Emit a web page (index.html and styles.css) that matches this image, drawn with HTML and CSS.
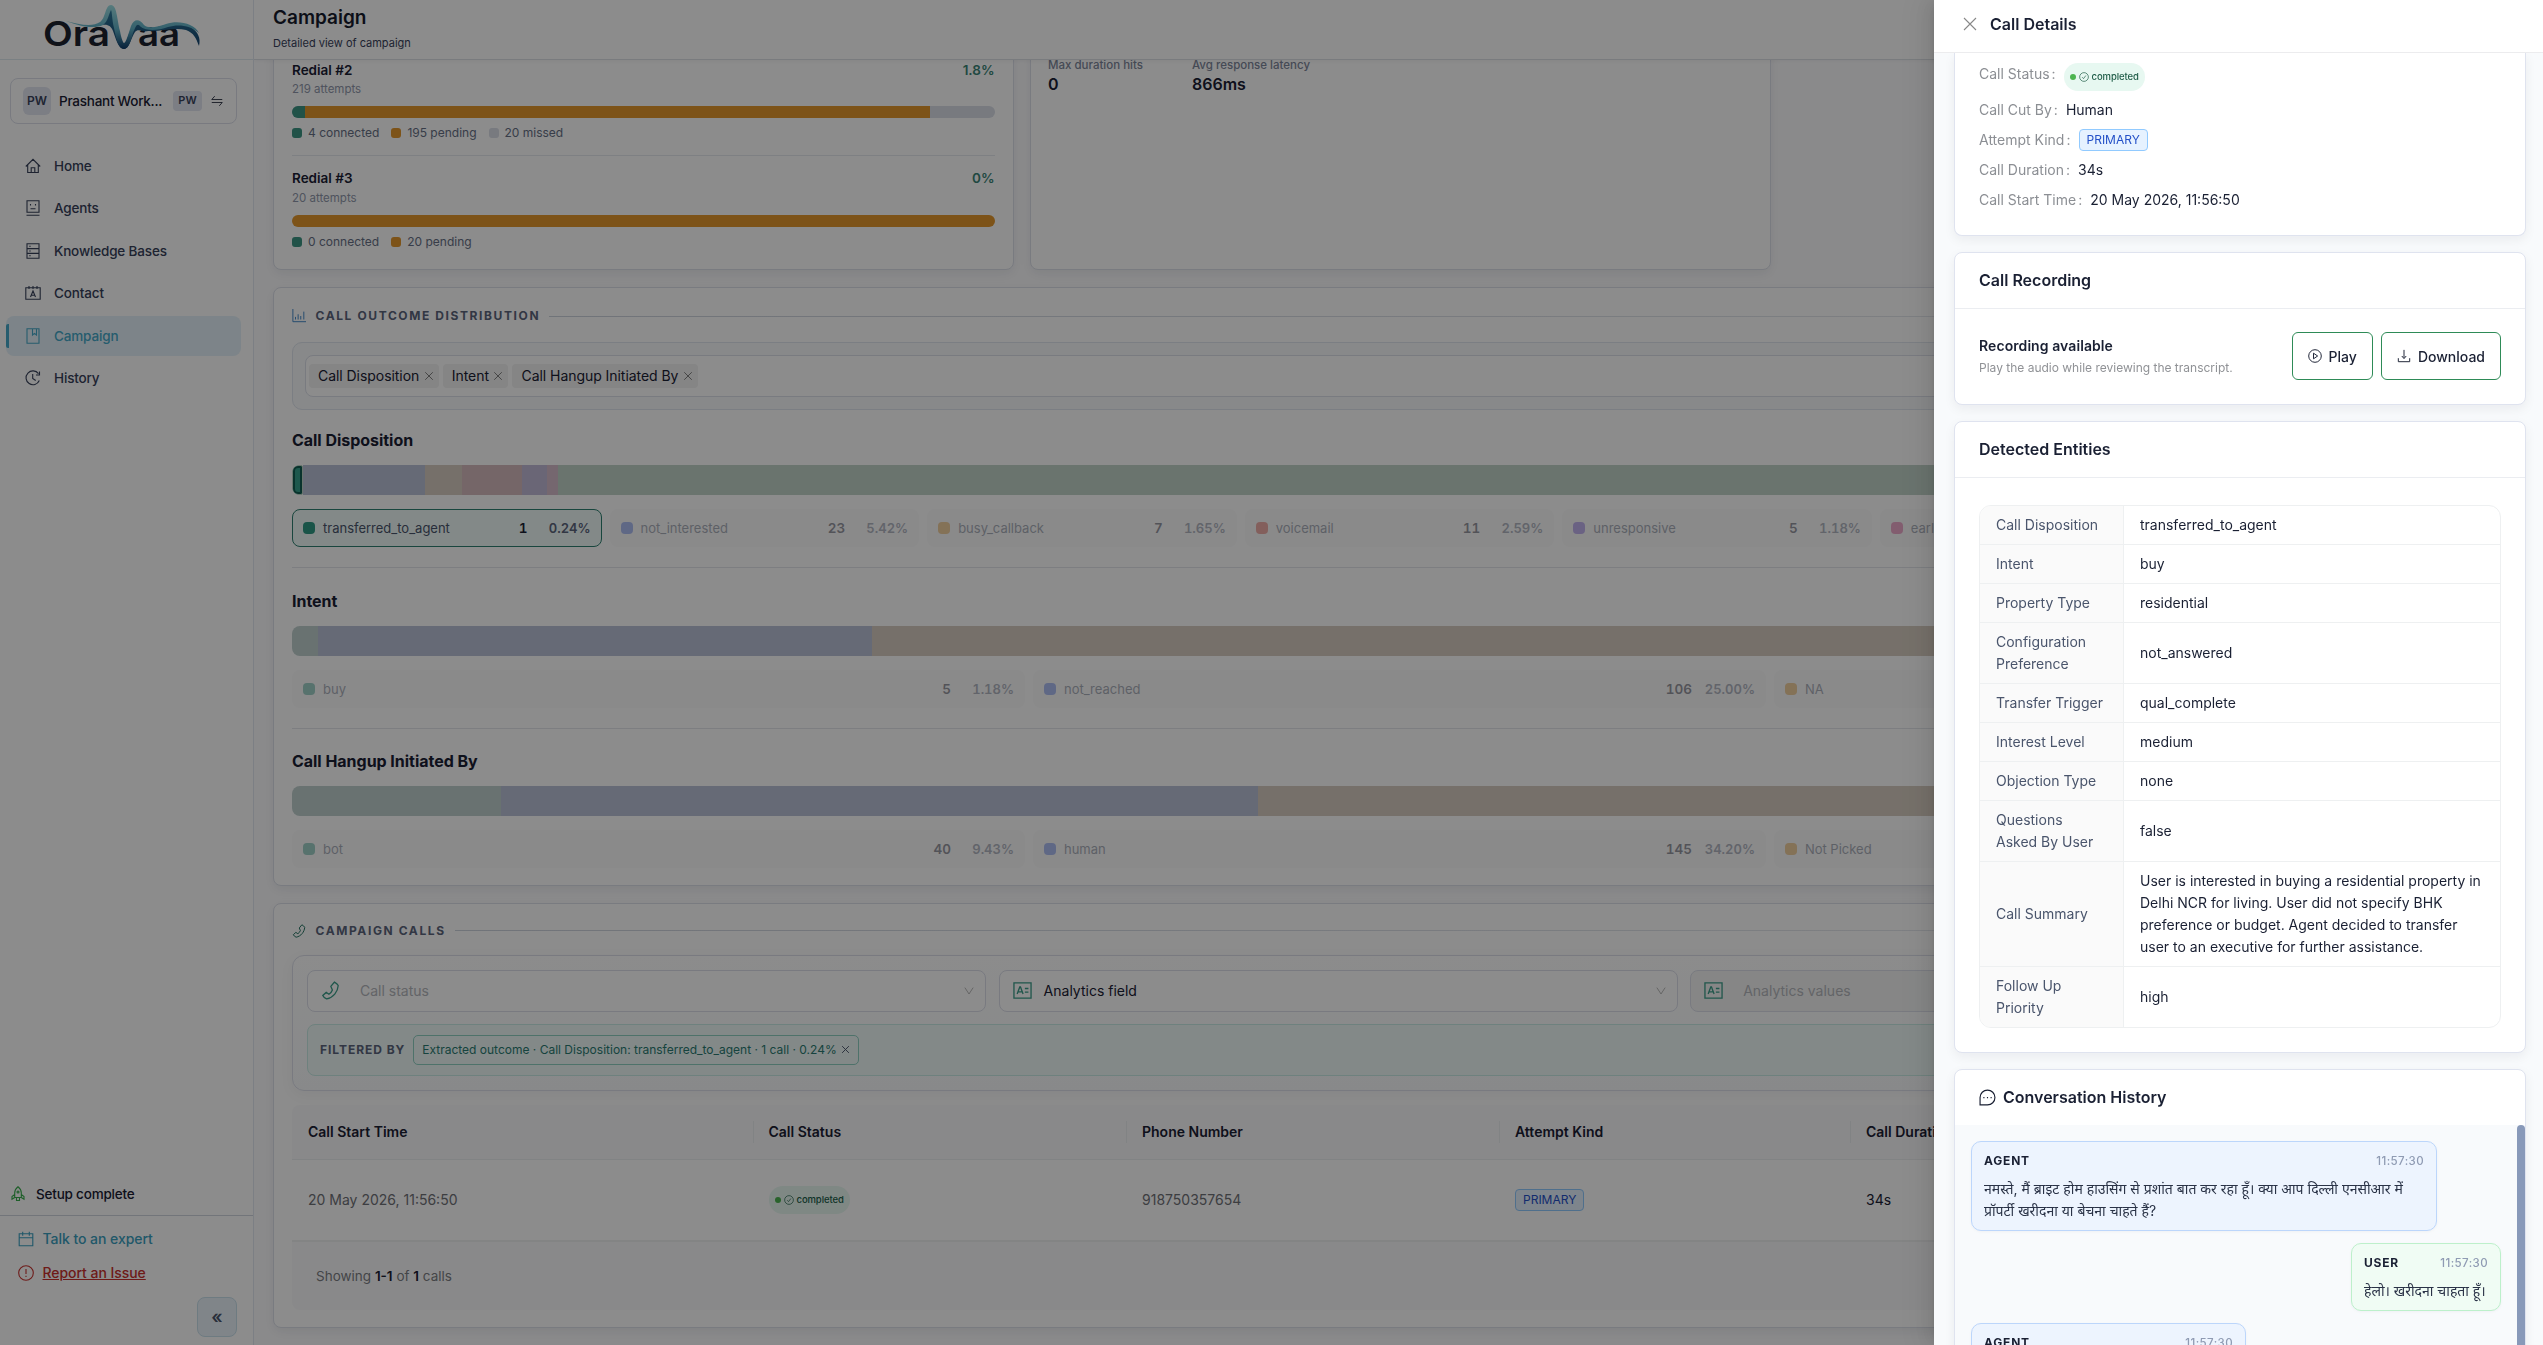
FILE: index.html
```html
<!DOCTYPE html>
<html lang="en">
<head>
<meta charset="utf-8">
<title>Campaign</title>
<link rel="stylesheet" href="styles.css">
</head>
<body>
<!-- shared icons -->
<svg class="defs" width="0" height="0">
  <symbol id="i-phone" viewBox="0 0 16 16"><path d="M11.300 .9c1.500.8 2.600 1.700 3.200 2.900-.3 5.200-4.200 10.200-9.800 11.300-1.400-.6-2.600-1.600-3.200-2.900l2.900-2.600 2.300 1.500c1.300-.8 2.300-2 2.900-3.600L8.300 4.600z"/></symbol>
  <symbol id="i-card" viewBox="0 0 16 16"><path d="M.8 1.500h14.400v13H.8zM3.500 11l2.200-6h.6l2.200 6M4.200 9.200h3.500M10 6.300h3M10 9.300h3"/></symbol>
  <symbol id="i-check" viewBox="0 0 16 16"><circle cx="8" cy="8" r="7"/><path d="M5 8.300l2.200 2.300 3.800-5"/></symbol>
  <symbol id="i-x" viewBox="0 0 16 16"><path d="M2 2l12 12M14 2L2 14"/></symbol>
  <symbol id="i-down" viewBox="0 0 16 16"><path d="M2.500 3.500L8 12l5.500-8.500"/></symbol>
</svg>

<div class="app">
  <aside class="sidebar">
    <div class="logo">
      <svg width="172" height="59" viewBox="0 0 172 59">
        <defs>
          <linearGradient id="wave" x1="0" y1="0" x2="0" y2="1">
            <stop offset="0" stop-color="#9fe0e4"/>
            <stop offset=".55" stop-color="#5fb0c6"/>
            <stop offset="1" stop-color="#0d3a68"/>
          </linearGradient>
          <linearGradient id="deep" x1="0" y1="0" x2="0" y2="1">
            <stop offset="0" stop-color="#2f7d9f"/>
            <stop offset="1" stop-color="#12406c"/>
          </linearGradient>
        </defs>
        <text x="7" y="45.500" class="logo-text" textLength="67" lengthAdjust="spacingAndGlyphs">Ora</text>
        <text x="102" y="45.500" class="logo-text" textLength="42" lengthAdjust="spacingAndGlyphs">aa</text>
        <path fill="url(#deep)" d="M66 24C71 21 72 12 74.500 8C78 12 79 24 82 29C84 36 86 42 88 46C91 42 93 32 96 27C98 22 101 20 103 24C106 29 112 29 118 28C132 24 146 22 155 27C162 32 165 38 163 46C160 38 158 33 150 30C138 27 124 32 112 31C106 32 102 28 99 32C95 38 93 49 88 49C83 49 80 40 77 31C75 26 72 24 66 25z"/>
        <path fill="url(#wave)" d="M30 21C44 25 57 27 64 22C70 18 69 5 75 5C81 5 81 20 84 31C85 37 87 43 88 43C90 43 93 32 95 26C98 18 104 19 108 25C112 29 122 27 130 24C142 20 158 23 163 33C154 25 142 24 132 27C122 31 110 31 105 27C101 22 100 26 97 33C95 40 93 49 88 49C82 49 80 38 78 28C76 20 76 11 75 10C73 13 72 22 67 25C59 29 45 27 30 21z"/>
      </svg>
    </div>

    <div class="workspace">
      <span class="ws-avatar">PW</span>
      <span class="ws-name">Prashant Work...</span>
      <span class="ws-badge">PW</span>
      <svg class="ico" width="12" height="12" viewBox="0 0 16 16"><path d="M15 6H1l4-4.500M1 10h14l-4 4.500"/></svg>
    </div>

    <nav class="nav">
      <a class="nav-item"><svg class="ico" viewBox="0 0 16 16"><path d="M.8 8.500L8 1.300l7.200 7.200M2.700 7v7.500h10.600V7M6.200 14.500V9.800h3.600v4.700"/></svg>Home</a>
      <a class="nav-item"><svg class="ico" viewBox="0 0 16 16"><path d="M2 .8h12v11.400H2zM1.500 15.200h13M5.500 4v1.500M10.500 4v1.500M5.500 8.800h5"/></svg>Agents</a>
      <a class="nav-item"><svg class="ico" viewBox="0 0 16 16"><path d="M2 .8h12v14.400H2zM2 5.600h12M2 10.400h12M4.200 3.200h1.500M4.200 8h1.500M4.200 12.800h1.500"/></svg>Knowledge Bases</a>
      <a class="nav-item"><svg class="ico" viewBox="0 0 16 16"><path d="M.8 2.800h14.400v11.400H.8zM4 1v3M8 1v3M12 1v3M5.500 12L8 6l2.500 6M6.300 10.200h3.400"/></svg>Contact</a>
      <a class="nav-item active"><svg class="ico" viewBox="0 0 16 16"><path d="M2 .8h12v14.400H2zM7.500 1v6l2-1.600 2 1.600V1"/></svg>Campaign</a>
      <a class="nav-item"><svg class="ico" viewBox="0 0 16 16"><path d="M14.300 10.500A6.900 6.900 0 1 1 13.500 3.700M14.500 1.500v3.500h-3.500M7.700 4v4.500l3 2"/></svg>History</a>
    </nav>

    <div class="setup">
      <svg class="ico green" width="16" height="16" viewBox="0 0 16 16"><path d="M8 .8c2.500 2 3.300 4 3.300 6v4.700H4.700V6.800c0-2 .8-4 3.300-6zM4.700 8.500L2 10.500v2.800l2.700-1.800M11.300 8.500l2.700 2v2.800l-2.700-1.800M6.500 11.500V14.500h3v-3"/><circle cx="8" cy="6" r="1"/></svg>
      Setup complete
    </div>
    <div class="side-links">
      <a class="expert"><svg class="ico" width="16" height="16" viewBox="0 0 16 16"><path d="M1.200 2.800h13.600v12H1.200zM1.200 6.800h13.600M4.700 .8v4M11.300 .8v4"/></svg>Talk to an expert</a>
      <a class="report"><svg class="ico" width="16" height="16" viewBox="0 0 16 16"><circle cx="8" cy="8" r="7.300"/><path d="M8 4v5M8 10.700v1.300"/></svg><u>Report an Issue</u></a>
      <button class="collapse">«</button>
    </div>
  </aside>

  <main class="main">
    <header class="header">
      <h1>Campaign</h1>
      <p>Detailed view of campaign</p>
    </header>

    <div class="content">
      <div class="top-cards">
        <section class="card redials">
          <div class="redial">
            <div class="redial-head"><b>Redial #2</b><b class="teal">1.8%</b></div>
            <div class="attempts">219 attempts</div>
            <div class="bar"><i class="connected" style="width:1.83%"></i><i class="pending" style="width:89.04%"></i></div>
            <div class="legend"><span><i class="connected"></i>4 connected</span><span><i class="pending"></i>195 pending</span><span><i class="missed"></i>20 missed</span></div>
          </div>
          <div class="redial">
            <div class="redial-head"><b>Redial #3</b><b class="teal">0%</b></div>
            <div class="attempts">20 attempts</div>
            <div class="bar"><i class="pending" style="width:100%"></i></div>
            <div class="legend"><span><i class="connected"></i>0 connected</span><span><i class="pending"></i>20 pending</span></div>
          </div>
        </section>
        <section class="card stats">
          <div class="stat first"><span>Max duration hits</span><b>0</b></div>
          <div class="stat"><span>Avg response latency</span><b>866ms</b></div>
        </section>
      </div>

      <section class="card outcome">
        <div class="section-title">
          <svg class="ico blue" width="14" height="14" viewBox="0 0 16 16"><path d="M1 0v14.500h15M4 12V9M7 12V6M10 12V8M13.500 12V3"/></svg>
          <span>CALL OUTCOME DISTRIBUTION</span>
        </div>
        <div class="tag-panel">
          <div class="tag-select">
            <span class="tag">Call Disposition<svg class="ico" viewBox="0 0 16 16"><use href="#i-x"/></svg></span>
            <span class="tag">Intent<svg class="ico" viewBox="0 0 16 16"><use href="#i-x"/></svg></span>
            <span class="tag">Call Hangup Initiated By<svg class="ico" viewBox="0 0 16 16"><use href="#i-x"/></svg></span>
          </div>
        </div>

        <div class="group">
          <h3>Call Disposition</h3>
          <div class="stack">
            <i class="s-selected"></i>
            <i class="s-blue" style="width:122px"></i>
            <i class="s-tan" style="width:37px"></i>
            <i class="s-red" style="width:60px"></i>
            <i class="s-purple" style="width:25px"></i>
            <i class="s-pink" style="width:11px"></i>
            <i class="s-green"></i>
          </div>
          <div class="items seven">
            <div class="item selected"><i class="teal-dot"></i><span>transferred_to_agent</span><b>1</b><em>0.24%</em></div>
            <div class="item"><i class="blue-dot"></i><span>not_interested</span><b>23</b><em>5.42%</em></div>
            <div class="item"><i class="amber-dot"></i><span>busy_callback</span><b>7</b><em>1.65%</em></div>
            <div class="item"><i class="red-dot"></i><span>voicemail</span><b>11</b><em>2.59%</em></div>
            <div class="item"><i class="purple-dot"></i><span>unresponsive</span><b>5</b><em>1.18%</em></div>
            <div class="item"><i class="pink-dot"></i><span>early_hangup</span></div>
            <div class="item"></div>
          </div>
        </div>

        <div class="group">
          <h3>Intent</h3>
          <div class="stack">
            <i class="s-teal" style="width:1.18%"></i>
            <i class="s-blue" style="width:25%"></i>
            <i class="s-tan rest"></i>
          </div>
          <div class="items three">
            <div class="item"><i class="teal-dot"></i><span>buy</span><b>5</b><em>1.18%</em></div>
            <div class="item"><i class="blue-dot"></i><span>not_reached</span><b>106</b><em>25.00%</em></div>
            <div class="item"><i class="amber-dot"></i><span>NA</span></div>
          </div>
        </div>

        <div class="group">
          <h3>Call Hangup Initiated By</h3>
          <div class="stack">
            <i class="s-teal" style="width:9.43%"></i>
            <i class="s-blue" style="width:34.2%"></i>
            <i class="s-tan rest"></i>
          </div>
          <div class="items three">
            <div class="item"><i class="teal-dot"></i><span>bot</span><b>40</b><em>9.43%</em></div>
            <div class="item"><i class="blue-dot"></i><span>human</span><b>145</b><em>34.20%</em></div>
            <div class="item"><i class="amber-dot"></i><span>Not Picked</span></div>
          </div>
        </div>
      </section>

      <section class="card calls">
        <div class="section-title">
          <svg class="ico phone" width="14" height="14"><use href="#i-phone"/></svg>
          <span>CAMPAIGN CALLS</span>
        </div>
        <div class="filters">
          <div class="selects">
            <div class="select"><svg class="ico lead" width="19" height="19"><use href="#i-phone"/></svg><span class="placeholder wide">Call status</span><svg class="ico arrow" width="12" height="12"><use href="#i-down"/></svg></div>
            <div class="select"><svg class="ico lead" width="19" height="19"><use href="#i-card"/></svg><span>Analytics field</span><svg class="ico arrow" width="12" height="12"><use href="#i-down"/></svg></div>
            <div class="select disabled"><svg class="ico lead" width="19" height="19"><use href="#i-card"/></svg><span class="placeholder wide">Analytics values</span><svg class="ico arrow" width="12" height="12"><use href="#i-down"/></svg></div>
          </div>
          <div class="filtered">
            <b>FILTERED BY</b>
            <span class="chip">Extracted outcome · Call Disposition: transferred_to_agent · 1 call · 0.24%<svg class="ico" width="9" height="9"><use href="#i-x"/></svg></span>
          </div>
        </div>

        <div class="table">
          <div class="tr th">
            <div>Call Start Time</div><div>Call Status</div><div>Phone Number</div><div>Attempt Kind</div><div>Call Duration</div>
          </div>
          <div class="tr td">
            <div class="muted">20 May 2026, 11:56:50</div>
            <div><span class="pill"><i></i><svg class="ico" width="10" height="10"><use href="#i-check"/></svg>completed</span></div>
            <div class="muted">918750357654</div>
            <div><span class="kind">PRIMARY</span></div>
            <div>34s</div>
          </div>
          <div class="tfoot">Showing <b>1-1</b> of <b>1</b> calls</div>
        </div>
      </section>
    </div>
  </main>
</div>

<div class="mask"></div>

<div class="drawer">
  <div class="drawer-head">
    <svg class="ico" width="16" height="16"><use href="#i-x"/></svg>
    Call Details
  </div>
  <div class="drawer-body">
    <section class="dcard info">
      <div class="info-row status"><label>Call Status</label><span class="pill"><i></i><svg class="ico" width="10" height="10"><use href="#i-check"/></svg>completed</span></div>
      <div class="info-row"><label>Call Cut By</label>Human</div>
      <div class="info-row"><label>Attempt Kind</label><span class="kind">PRIMARY</span></div>
      <div class="info-row"><label>Call Duration</label>34s</div>
      <div class="info-row"><label>Call Start Time</label>20 May 2026, 11:56:50</div>
    </section>

    <section class="dcard">
      <h2>Call Recording</h2>
      <div class="recording">
        <div class="rec-text"><b>Recording available</b><span>Play the audio while reviewing the transcript.</span></div>
        <button class="btn"><svg class="ico" width="14" height="14" viewBox="0 0 16 16"><circle cx="8" cy="8" r="7.200"/><path d="M6.300 4.800v6.400L11 8z"/></svg>Play</button>
        <button class="btn"><svg class="ico" width="14" height="14" viewBox="0 0 16 16"><path d="M8 1v9M5.500 8L8 11l2.500-3M1.500 10.500v4h13v-4"/></svg>Download</button>
      </div>
    </section>

    <section class="dcard">
      <h2>Detected Entities</h2>
      <div class="entities">
        <div class="ent"><div>Call Disposition</div><div>transferred_to_agent</div></div>
        <div class="ent"><div>Intent</div><div>buy</div></div>
        <div class="ent"><div>Property Type</div><div>residential</div></div>
        <div class="ent"><div>Configuration Preference</div><div>not_answered</div></div>
        <div class="ent"><div>Transfer Trigger</div><div>qual_complete</div></div>
        <div class="ent"><div>Interest Level</div><div>medium</div></div>
        <div class="ent"><div>Objection Type</div><div>none</div></div>
        <div class="ent"><div>Questions Asked&nbsp;By&nbsp;User</div><div>false</div></div>
        <div class="ent"><div>Call Summary</div><div>User is interested in buying a residential property in Delhi NCR for living. User did not specify BHK preference or budget. Agent decided to transfer user to an executive for further assistance.</div></div>
        <div class="ent"><div>Follow Up Priority</div><div>high</div></div>
      </div>
    </section>

    <section class="dcard conversation">
      <h2><svg class="ico" width="17" height="17" viewBox="0 0 16 16"><path d="M1 15V8a7 7 0 1 1 7 7zM4.600 7.500v1.200M8 7.500v1.200M11.400 7.500v1.200"/></svg>Conversation History</h2>
      <div class="chat">
        <div class="messages">
          <div class="msg agent">
            <div class="msg-head"><b>AGENT</b><time>11:57:30</time></div>
            <p>नमस्ते, मैं ब्राइट होम हाउसिंग से प्रशांत बात कर रहा हूँ। क्या आप दिल्ली एनसीआर में<br>प्रॉपर्टी खरीदना या बेचना चाहते हैं?</p>
          </div>
          <div class="msg user">
            <div class="msg-head"><b>USER</b><time>11:57:30</time></div>
            <p>हेलो। खरीदना चाहता हूँ।</p>
          </div>
          <div class="msg agent short">
            <div class="msg-head"><b>AGENT</b><time>11:57:30</time></div>
          </div>
        </div>
        <div class="scroll-thumb"></div>
      </div>
    </section>
  </div>
</div>
</body>
</html>
```
FILE: styles.css
```css
* {box-sizing: border-box;}

body {
  margin: 0;
  height: 1345px;
  overflow: hidden;
  font-family: Inter, "Noto Sans", sans-serif;
  font-size: 14px;
  line-height: 22px;
  color: #1a2033;
  background: #fff;
}

h1, h2, h3, p { margin: 0; }
i, em { font-style: normal; }

.defs { display: block; height: 0; }

.ico {
  flex: none;
  fill: none;
  stroke: currentColor;
  stroke-width: 1.1;
}

.app {
  display: flex;
  height: 1345px;
}

/* sidebar */
.sidebar {
  width: 254px;
  flex: none;
  display: flex;
  flex-direction: column;
  border-right: 1px solid #e2e8f0;
}

.logo {
  height: 60px;
  padding-left: 36px;
  border-bottom: 1px solid #dfe9ef;
}
.logo svg { display: block; }
.logo-text {
  font-size: 34px;
  font-weight: 600;
  fill: #1c212e;
}

.workspace {
  display: flex;
  align-items: center;
  height: 46px;
  margin: 18px 16px 0 10px;
  padding: 0 13px 0 12px;
  border: 1px solid #dcdfea;
  border-radius: 8px;
}
.ws-avatar {
  width: 28px;
  height: 28px;
  line-height: 28px;
  border-radius: 6px;
  background: #e2e5f1;
  text-align: center;
  font-size: 12px;
  font-weight: 600;
  color: #39435c;
}
.ws-name {
  flex: 1;
  margin-left: 8px;
  font-size: 13.500px;
  font-weight: 500;
  letter-spacing: -.25px;
  white-space: nowrap;
}
.ws-badge {
  width: 29px;
  height: 20px;
  line-height: 19px;
  margin-right: 9px;
  border-radius: 4px;
  background: #e2e5f1;
  text-align: center;
  font-size: 11px;
  font-weight: 600;
  color: #39435c;
}

.nav {
  margin-top: 22px;
  padding: 0 12px 0 6px;
  display: flex;
  flex-direction: column;
  gap: 2.400px;
}
.nav-item {
  position: relative;
  display: flex;
  align-items: center;
  gap: 13px;
  height: 40px;
  padding-left: 19px;
  border-radius: 8px;
  font-size: 13.500px;
  font-weight: 500;
  letter-spacing: -.15px;
  color: #37415a;
}
.nav-item .ico { width: 16px; height: 16px; }
.nav-item.active {
  background: #e4f1f9;
  color: #45a8c8;
}
.nav-item.active::before {
  content: "";
  position: absolute;
  left: 0;
  top: 8px;
  width: 3px;
  height: 24px;
  border-radius: 2px 0 0 2px;
  background: #45a8c8;
}

.setup {
  display: flex;
  align-items: center;
  gap: 10px;
  height: 42px;
  margin-top: auto;
  padding: 0 0 1px 10px;
  border-bottom: 1px solid #cfd6df;
  font-size: 13.500px;
  font-weight: 500;
  letter-spacing: -.2px;
}
.green { color: #38ad4c; }
.side-links {
  height: 129px;
  padding: 12px 16px 8px 18px;
  display: flex;
  flex-direction: column;
}
.side-links a {
  display: flex;
  align-items: center;
  gap: 8.500px;
  height: 22px;
  margin-bottom: 12px;
  font-weight: 500;
  letter-spacing: -.05px;
}
.expert { color: #3ba0c0; }
.report { color: #c8322f; }
.side-links .collapse {
  width: 40px;
  height: 40px;
  margin-top: 1px;
  margin-left: auto;
  padding: 0;
  border: 1px solid #c9e0ec;
  border-radius: 8px;
  background: #eaf3fa;
  font: 600 18px/36px Inter, sans-serif;
  color: #4a556c;
}

/* main column */
.main {
  flex: 1;
  min-width: 0;
  overflow: hidden;
  background: #fcfcfe;
}
.header {
  position: relative;
  z-index: 2;
  height: 60px;
  padding: 5px 0 0 19px;
  border-bottom: 1px solid #dde1e6;
  background: #fff;
  box-shadow: 0 1px 4px rgba(0,0,0,.05);
}
.header h1 {
  font-size: 19px;
  line-height: 25px;
  font-weight: 600;
  color: #161b2c;
}
.header p {
  margin-top: 4px;
  font-size: 11px;
  line-height: 18px;
  color: #37415a;
}

.content {
  margin-top: -21px;
  padding: 0 17px 0 19px;
}
.card {
  border: 1px solid #dde0ea;
  border-radius: 8px;
  background: #fff;
  box-shadow: 0 4px 12px rgba(15,23,42,.07);
}

/* the header covers the first rows of these */
.top-cards {
  display: grid;
  grid-template-columns: repeat(3, 740.500px);
  gap: 16.500px;
  height: 231px;
}
.redials { padding: 19px 18px 0; }
.redial + .redial {
  margin-top: 13px;
  padding-top: 11px;
  border-top: 1px solid #e6e9ee;
}
.redial-head {
  display: flex;
  justify-content: space-between;
  font-size: 13.500px;
  font-weight: 600;
}
.redial-head b { font-weight: 600; }
.redial-head .teal { color: #3b8577; }
.attempts {
  font-size: 11.500px;
  line-height: 18px;
  color: #9098ab;
}
.redial:first-child .attempts { line-height: 17px; }
.bar {
  display: flex;
  height: 12px;
  margin: 8px 0 6px;
  overflow: hidden;
  border-radius: 6px;
  background: #dadfe8;
}
.legend {
  display: flex;
  gap: 12px;
  font-size: 12px;
  line-height: 18px;
  color: #667085;
}
.legend span { display: flex; align-items: center; }
.legend i {
  width: 10px;
  height: 10px;
  margin-right: 6px;
  border-radius: 3px;
}
.connected { background: #3c9584; }
.pending { background: #e4982c; }
.missed { background: #dadfe8; }

.stats { display: flex; padding: 15.500px 17px; }
.stat span {
  display: block;
  font-size: 11.500px;
  line-height: 18px;
  font-weight: 500;
  color: #7e879b;
}
.stat.first { width: 144px; }
.stat b { display: block; font-size: 16px; line-height: 21px; font-weight: 600; }

.outcome {
  height: 599px;
  margin-top: 17px;
  padding: 19px 18px 0;
}
.section-title {
  display: flex;
  align-items: center;
  height: 18px;
  font-size: 12px;
  font-weight: 700;
  letter-spacing: 1.600px;
  color: #5b657c;
}
.section-title span { margin: 0 9px 0 9.500px; }
.section-title::after {
  content: "";
  flex: 1;
  height: 1px;
  background: linear-gradient(90deg, #cdd3dd, #eef0f4);
}
.blue { color: #3f86c8; }
.phone { color: #1f6f5f; }

.tag-panel {
  height: 68px;
  margin-top: 17px;
  padding: 12px;
  border: 1px solid #e0e6ee;
  border-radius: 10px;
  background: #f7f9fc;
}
.tag-select {
  display: flex;
  align-items: center;
  gap: 4px;
  height: 42px;
  padding: 0 3px;
  border: 1px solid #dde0ea;
  border-radius: 8px;
  background: #fff;
}
.tag {
  display: flex;
  align-items: center;
  gap: 4.500px;
  height: 24px;
  padding: 0 5px 0 9px;
  border-radius: 4px;
  background: #f2f2f2;
  font-size: 14px;
  letter-spacing: -.05px;
}
.tag .ico { width: 10px; height: 10px; color: #777; stroke-width: 1.500; }

.group { padding-top: 18px; }
.group + .group {
  margin-top: 20px;
  padding-top: 20.500px;
  border-top: 1px solid #e3e6eb;
}
.group h3 {
  font-size: 16px;
  line-height: 24px;
  font-weight: 700;
  letter-spacing: -.03px;
}
.stack {
  display: flex;
  height: 30px;
  margin: 13px 0 14px;
  overflow: hidden;
  border-radius: 8px;
}
.s-selected {
  width: 10.500px;
  border: 1px solid #c1d5c8;
  background: #35a08c;
  box-shadow: inset 0 0 0 2px #115e52;
  border-radius: 6px 2px 2px 6px;
}
.s-blue { background: #bac2d7; }
.s-tan { background: #d7cdc1; }
.s-red { background: #d5babd; }
.s-purple { background: #c2bbd8; }
.s-pink { background: #d6bccb; }
.s-green { flex: 1; background: #c1d3c9; }
.s-teal { background: #bfcfce; }
.rest { flex: 1; }

.items { display: grid; gap: 8px; }
.seven { grid-template-columns: repeat(7, minmax(0, 1fr)); }
.three { grid-template-columns: repeat(3, minmax(0, 1fr)); }
.item {
  display: flex;
  align-items: center;
  height: 38px;
  padding: 0 10px;
  border: 1px solid transparent;
  border-radius: 8px;
  font-size: 13.500px;
  font-variant-numeric: tabular-nums;
  background: #fbfbfc;
}
.item > * { opacity: .45; }
.item i {
  width: 12px;
  height: 12px;
  margin-right: 8px;
  border-radius: 4px;
}
.item span { flex: 1; font-size: 13px; color: #4a556c; }
.item b { font-weight: 600; margin-right: 12px; }
.item em {
  width: 51px;
  text-align: right;
  font-size: 13px;
  font-weight: 600;
  color: #5b657c;
}
.item.selected {
  border-color: #2f8071;
  background: #effaf8;
}
.item.selected > * { opacity: 1; }
.teal-dot { background: #2f9984; }
.blue-dot { background: #4f74e8; }
.amber-dot { background: #e2992c; }
.red-dot { background: #e04f42; }
.purple-dot { background: #7c58e0; }
.pink-dot { background: #dc4890; }

.calls {
  height: 425px;
  margin-top: 17px;
  padding: 17.500px 18px 0;
}
.filters {
  height: 136px;
  margin-top: 15px;
  padding: 14px;
  border: 1px solid #dcdfea;
  border-radius: 12px;
  background: linear-gradient(#fff, #f8fafc);
  box-shadow: 0 4px 14px rgba(15,23,42,.05);
}
.selects {
  display: grid;
  grid-template-columns: repeat(3, 679px);
  gap: 12.600px;
}
.select {
  display: flex;
  align-items: center;
  height: 42px;
  padding: 0 10px 0 13px;
  border: 1px solid #dcdfea;
  border-radius: 8px;
  background: #fff;
}
.select.disabled { background: #f4f5f5; }
.select span { flex: 1; margin-left: 12px; }
.select .wide { margin-left: 20px; }
.placeholder { color: #b4b7bc; }
.lead { color: #3a9d89; }
.arrow { color: #aaa; }
.filtered {
  display: flex;
  align-items: center;
  gap: 8px;
  height: 52px;
  margin-top: 12px;
  padding: 0 12px;
  border: 1px solid #c9ece5;
  border-radius: 8px;
  background: #eef9f7;
}
.filtered b {
  font-size: 12px;
  letter-spacing: .95px;
  color: #5b657c;
}
.chip {
  display: flex;
  align-items: center;
  gap: 4px;
  height: 30px;
  padding: 0 8px 0 8px;
  border: 1px solid #8fcfc2;
  border-radius: 5px;
  background: #eefaf8;
  font-size: 12px;
  color: #2a7a72;
}
.chip .ico { color: #4a556c; stroke-width: 1.700; }

.table { margin-top: 14.500px; }
.tr {
  display: grid;
  grid-template-columns: 460.500px 373.500px 373px 351px 1fr;
  align-items: center;
}
.tr > div { padding-left: 16px; }
.th {
  height: 55px;
  border-bottom: 1px solid #eceef0;
  border-radius: 8px 8px 0 0;
  background: #fafafb;
  font-weight: 600;
}
.th > div + div { padding-left: 15px; border-left: 1px solid #eceef0; }
.td {
  height: 82px;
  border-bottom: 2px solid #eff0f1;
}
.muted { color: #6f7177; }
.tfoot {
  height: 68px;
  padding: 23px 24px;
  border-radius: 0 0 8px 8px;
  background: #fafafb;
  color: #7c7e84;
  font-size: 13.500px;
}
.tfoot b { font-weight: 600; color: #1a2033; }

.pill {
  display: inline-flex;
  align-items: center;
  gap: 3px;
  height: 28px;
  padding: 0 6px;
  border-radius: 14px;
  background: #e7f8f1;
  font-size: 9.500px;
  font-weight: 500;
  letter-spacing: -.1px;
  color: #215e49;
  vertical-align: top;
}
.pill i {
  width: 6px;
  height: 6px;
  border-radius: 50%;
  background: #4cb550;
}
.pill .ico { width: 10px; height: 10px; }
.kind {
  display: inline-block;
  height: 22px;
  padding: 0 7px;
  border: 1px solid #91caff;
  border-radius: 4px;
  background: #e6f2ff;
  font-size: 12px;
  line-height: 20px;
  color: #2450c8;
  vertical-align: top;
}

.mask {
  position: fixed;
  inset: 0;
  z-index: 10;
  background: rgba(0,0,0,.45);
}

/* call details drawer */
.drawer {
  position: fixed;
  top: 0;
  right: 0;
  z-index: 11;
  width: 609px;
  height: 1345px;
  display: flex;
  flex-direction: column;
  background: #f8fafc;
  box-shadow: -6px 0 16px rgba(0,0,0,.08), -3px 0 6px -4px rgba(0,0,0,.12), -9px 0 28px 8px rgba(0,0,0,.05);
}
.drawer-head {
  flex: none;
  display: flex;
  align-items: center;
  gap: 12px;
  height: 53px;
  padding: 0 0 4px 28px;
  border-bottom: 1px solid #ececee;
  background: #fff;
  font-size: 16px;
  font-weight: 600;
}
.drawer-head .ico { color: #888; }
.drawer-body {
  flex: 1;
  overflow: hidden;
  padding: 0 17px 0 20px;
}
.dcard {
  margin-bottom: 16px;
  border: 1px solid #dfe3ef;
  border-radius: 8px;
  background: #fff;
  box-shadow: 0 4px 12px rgba(15,23,42,.06);
}
.dcard h2 {
  display: flex;
  align-items: center;
  gap: 7px;
  height: 56px;
  padding: 0 24px 1px;
  border-bottom: 1px solid #ebedf1;
  font-size: 16px;
  font-weight: 600;
}
.info {
  height: 183px;
  padding: 10px 24px 0;
  border-top: 0;
  border-radius: 0 0 8px 8px;
}
.info-row {
  display: flex;
  height: 22px;
  margin-bottom: 8px;
}
.info-row.status { height: 28px; margin-bottom: 8px; }
.info-row label { color: #8c8f94; }
.info-row label::after { content: ":"; margin: 0 8px 0 2px; }

.recording {
  display: flex;
  align-items: center;
  gap: 8px;
  height: 95px;
  padding: 0 24px 1px;
}
.rec-text { flex: 1; padding-top: 1px; }
.rec-text b, .rec-text span { display: block; }
.rec-text b { font-weight: 600; letter-spacing: .08px; }
.rec-text span { font-size: 12px; color: #909296; }
.btn {
  display: flex;
  align-items: center;
  gap: 7px;
  height: 48px;
  padding: 0 15px;
  border: 1px solid #2e8b57;
  border-radius: 6px;
  background: #fff;
  font: 500 14px Inter, sans-serif;
  color: #1a2033;
}

.entities {
  margin: 27px 24px 24px;
  overflow: hidden;
  border: 1px solid #eef0f1;
  border-radius: 12px;
}
.ent {
  display: grid;
  grid-template-columns: 144px 1fr;
}
.ent + .ent { border-top: 1px solid #eef0f1; }
.ent > div {
  display: flex;
  align-items: center;
  padding: 8px 16px;
}
.ent > div:first-child {
  border-right: 1px solid #eef0f1;
  background: #fafafa;
  color: #4a556c;
}

.conversation { overflow: hidden; margin-bottom: 0; }
.conversation h2 { height: 55px; border: 0; }
.chat { display: flex; background: #f8fafc; }
.messages {
  flex: 1;
  height: 300px;
  display: flex;
  flex-direction: column;
  align-items: flex-start;
  gap: 12px;
  padding: 16px 16px 0;
}
.scroll-thumb {
  width: 8px;
  height: 300px;
  border-radius: 4px;
  background: #8899b9;
}
.msg {
  padding: 8px 12px;
  border: 1px solid #bcd6fb;
  border-radius: 10px;
  background: #edf4fe;
  box-shadow: 0 1px 3px rgba(15,23,42,.04);
}
.msg.agent { width: 466px; }
.msg.user {
  width: 150px;
  align-self: flex-end;
  border-color: #bdf0cb;
  background: #f0fcf4;
}
.msg.short { width: 275px; height: 90px; }
.msg-head {
  display: flex;
  justify-content: space-between;
  margin-bottom: 6px;
  font-size: 12px;
}
.msg-head b { letter-spacing: .8px; }
.msg-head time { font-size: 11.500px; font-weight: 500; letter-spacing: .4px; color: #8f9bb3; }
.msg p { white-space: nowrap; color: #2a3347; }
```
